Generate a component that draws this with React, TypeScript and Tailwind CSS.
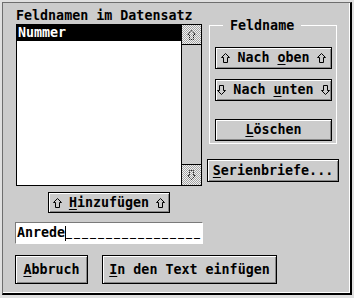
import React from 'react';

type Dir = 'up' | 'down';

// outline arrow as used on the GEM buttons (dotted variant for the scroller)
function Arrow({ dir, dotted = false }: { dir: Dir; dotted?: boolean }) {
  return (
    <svg
      width="9"
      height="10"
      viewBox="0 0 9 10"
      className={dir === 'down' ? 'rotate-180 shrink-0' : 'shrink-0'}
    >
      <path
        d="M4.5 0.5 L8.5 4.5 H6.5 V9.5 H2.5 V4.5 H0.5 Z"
        fill="none"
        stroke="#000"
        strokeWidth="1"
        strokeDasharray={dotted ? '1 1' : undefined}
      />
    </svg>
  );
}

function GemButton({
  className,
  children,
}: {
  className: string;
  children: React.ReactNode;
}) {
  return (
    <button
      type="button"
      className={`flex items-center justify-center border border-black bg-[#cccccc] font-bold text-black shadow-[inset_1px_1px_0_#ffffff,inset_-1px_-1px_0_#888888] ${className}`}
    >
      {children}
    </button>
  );
}

const Key = ({ c }: { c: string }) => <span className="underline underline-offset-2">{c}</span>;

export default function App() {
  return (
    <div className="h-[298px] w-[354px] bg-[#e0e0e0] p-[2px] font-['DejaVu_Sans_Mono',monospace] text-[13.33px] leading-[16px] text-black">
      <div className="h-[293px] w-[350px] border-l border-t border-[#6e6e6e] border-b-2 border-r-2 border-b-black border-r-black bg-[#cccccc] pl-[13px] pt-[5px] shadow-[inset_-1px_-1px_0_#ffffff]">
        <div className="flex">
          {/* left column */}
          <div className="flex w-[186px] flex-col">
            <div className="h-[16px] font-bold">Feldnamen im Datensatz</div>
            <div className="flex h-[162px] border border-black bg-white">
              <div className="flex-1">
                <div className="h-[16px] bg-black pl-[1px] font-bold text-white">Nummer</div>
              </div>
              <div className="flex w-[20px] flex-col border-l border-black">
                <div className="flex h-[20px] items-center justify-center border-b border-black bg-[repeating-conic-gradient(#a4a4a4_0_25%,#f2f2f2_0_50%)] bg-size-[2px_2px]">
                  <Arrow dir="up" dotted />
                </div>
                <div className="flex-1 bg-[#cccccc]" />
                <div className="flex h-[21px] items-center justify-center border-t border-black bg-[repeating-conic-gradient(#a4a4a4_0_25%,#f2f2f2_0_50%)] bg-size-[2px_2px]">
                  <Arrow dir="down" dotted />
                </div>
              </div>
            </div>
            <GemButton className="mx-auto mt-[6px] h-[21px] w-[122px] gap-[7px]">
              <Arrow dir="up" />
              <span>
                <Key c="H" />
                inzufügen
              </span>
              <Arrow dir="up" />
            </GemButton>
            <div className="ml-[-1px] mt-[9px] flex h-[22px] w-[188px] items-center border-b border-l border-r border-t border-b-white border-l-[#7a7a7a] border-r-white border-t-[#7a7a7a] bg-white pl-[1px] font-bold">
              <span>Anrede</span>
              <span className="h-[15px] w-px bg-black" />
              <span className="text-[10px] tracking-[1.98px]">_________________</span>
            </div>
          </div>

          {/* right column */}
          <div className="ml-[7px] flex flex-col">
            <fieldset className="mt-[8px] h-[128px] w-[128px] border border-white pl-[5px] pr-[4px]">
              <legend className="ml-[8px] px-[7px] pt-[2px] font-bold">Feldname</legend>
              <div className="flex flex-col">
                <GemButton className="mt-[13px] h-[22px] w-[117px] gap-[7px]">
                  <Arrow dir="up" />
                  <span>
                    Nach <Key c="o" />
                    ben
                  </span>
                  <Arrow dir="up" />
                </GemButton>
                <GemButton className="mt-[10px] h-[22px] w-[117px] gap-[7px]">
                  <Arrow dir="down" />
                  <span>
                    Nach <Key c="u" />
                    nten
                  </span>
                  <Arrow dir="down" />
                </GemButton>
                <GemButton className="mt-[18px] h-[22px] w-[117px]">
                  <span>
                    <Key c="L" />
                    öschen
                  </span>
                </GemButton>
              </div>
            </fieldset>
            <GemButton className="ml-[-2px] mt-[15px] h-[23px] w-[132px]">
              <span>
                <Key c="S" />
                erienbriefe...
              </span>
            </GemButton>
          </div>
        </div>

        {/* bottom row */}
        <div className="ml-[-1px] mt-[11px] flex">
          <GemButton className="h-[29px] w-[73px]">
            <span>
              <Key c="A" />
              bbruch
            </span>
          </GemButton>
          <GemButton className="ml-[14px] h-[29px] w-[175px]">
            <span>
              <Key c="I" />n den Text einfügen
            </span>
          </GemButton>
        </div>
      </div>
    </div>
  );
}
